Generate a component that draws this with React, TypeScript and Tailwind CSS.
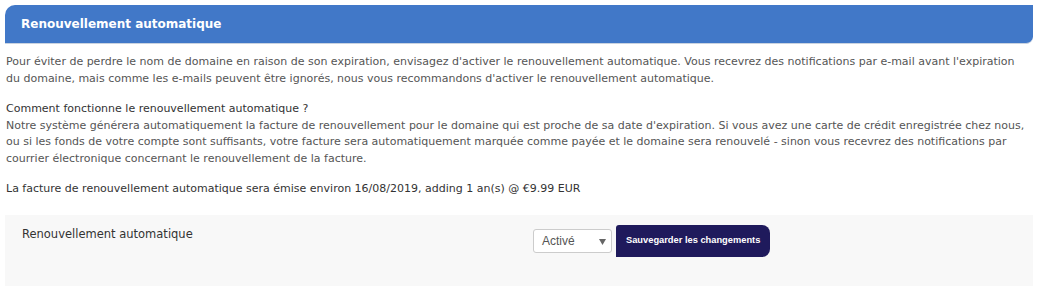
export default function App() {
  return (
    <div className="w-[1041px] h-[294px] bg-white px-[5px] pt-[5px] font-['DejaVu_Sans',sans-serif] text-[#555]">
      <div className="w-[1028px]">
        <div className="h-[39px] bg-[#4178c8] rounded-tl-[10px] rounded-br-[7px] border-b border-[#c9d3e0] flex items-center px-4">
          <h3 className="text-white text-[12px] font-semibold">Renouvellement automatique</h3>
        </div>
        <div className="pt-[10px] text-[11px] leading-[16.5px]">
          <p className="pl-[1px]">
            Pour éviter de perdre le nom de domaine en raison de son expiration, envisagez d'activer le renouvellement automatique. Vous recevrez des notifications par e-mail avant l'expiration
            <br />
            du domaine, mais comme les e-mails peuvent être ignorés, nous vous recommandons d'activer le renouvellement automatique.
          </p>
          <p className="pl-[1px] mt-[14px]">
            <span className="text-[#333]">Comment fonctionne le renouvellement automatique ?</span>
            <br />
            Notre système générera automatiquement la facture de renouvellement pour le domaine qui est proche de sa date d'expiration. Si vous avez une carte de crédit enregistrée chez nous,
            <br />
            ou si les fonds de votre compte sont suffisants, votre facture sera automatiquement marquée comme payée et le domaine sera renouvelé - sinon vous recevrez des notifications par
            <br />
            courrier électronique concernant le renouvellement de la facture.
          </p>
          <p className="pl-[1px] mt-[14px] text-[#333]">
            La facture de renouvellement automatique sera émise environ 16/08/2019, adding 1 an(s) @ €9.99 EUR
          </p>
        </div>
        <div className="mt-[17px] h-[71px] bg-[#f8f8f8] flex items-start">
          <div className="w-[528px] pl-[17px] pt-[11px] text-[11.5px] text-[#333]">Renouvellement automatique</div>
          <div className="flex items-start pt-[10px]">
            <div className="mt-[4px] relative w-[79px] h-[24px] bg-white border border-[#ccc] rounded-[3px] flex items-center pl-[8px] font-['Liberation_Sans',sans-serif] text-[12px] text-[#555]">
              Activé
              <svg className="absolute right-[5px] top-[9px]" width="7" height="6" viewBox="0 0 7 6">
                <path d="M0 0H7L3.5 6Z" fill="#666" />
              </svg>
            </div>
            <button className="ml-[4px] h-[32px] px-[10px] bg-[#1f1a5c] text-white text-[9.3px] font-bold font-['Liberation_Sans',sans-serif] rounded-tl-[3px] rounded-tr-[8px] rounded-br-[8px]">
              Sauvegarder les changements
            </button>
          </div>
        </div>
      </div>
    </div>
  );
}
